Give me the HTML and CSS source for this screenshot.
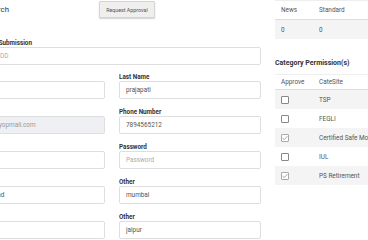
FILE: index.html
```html
<!DOCTYPE html>
<html>
<head>
<meta charset="utf-8">
<link rel="stylesheet" href="styles.css">
</head>
<body>
<div class="page">
  <div class="form">
    <div class="toolbar">
      <span class="title">Search</span>
      <button class="btn">Request Approval</button>
    </div>
    <div class="field wide">
      <label>Date of Last Submission</label>
      <input class="input" placeholder="YYYY-MM-DD">
    </div>
    <div class="grid">
      <div class="field"><label>First Name</label><input class="input"></div>
      <div class="field"><label>Last Name</label><input class="input" value="prajapati"></div>
      <div class="field"><label>Email</label><input class="input" disabled value="testing1@yopmail.com"></div>
      <div class="field"><label>Phone Number</label><input class="input" value="7894565212"></div>
      <div class="field"><label>Confirm</label><input class="input"></div>
      <div class="field"><label>Password</label><input class="input" placeholder="Password"></div>
      <div class="field"><label>City</label><input class="input" value="Ahmedabad"></div>
      <div class="field"><label>Other</label><input class="input" value="mumbai"></div>
      <div class="field"><label>Zip</label><input class="input"></div>
      <div class="field"><label>Other</label><input class="input" value="jaipur"></div>
    </div>
  </div>
  <div class="side">
    <table class="tbl top">
      <thead><tr><th class="c1">News</th><th>Standard</th></tr></thead>
      <tbody><tr class="odd"><td class="c1">0</td><td>0</td></tr></tbody>
    </table>
    <h3 class="heading">Category Permission(s)</h3>
    <table class="tbl cat">
      <thead><tr><th class="c1">Approve</th><th>CateSite</th></tr></thead>
      <tbody>
        <tr class="odd"><td class="c1"><span class="cb"></span></td><td>TSP</td></tr>
        <tr><td class="c1"><span class="cb"></span></td><td>FEGLI</td></tr>
        <tr class="odd"><td class="c1"><span class="cb on"><svg viewBox="0 0 8 8" width="8" height="8"><path d="M1.6 4.1 L3.2 5.6 L6.4 2.2" fill="none" stroke="#999" stroke-width="0.9"/></svg></span></td><td>Certified Safe Money</td></tr>
        <tr><td class="c1"><span class="cb"></span></td><td>IUL</td></tr>
        <tr class="odd"><td class="c1"><span class="cb on"><svg viewBox="0 0 8 8" width="8" height="8"><path d="M1.6 4.1 L3.2 5.6 L6.4 2.2" fill="none" stroke="#999" stroke-width="0.9"/></svg></span></td><td>PS Retirement</td></tr>
      </tbody>
    </table>
  </div>
</div>
</body>
</html>
```

FILE: styles.css
```css
html, body {
  margin: 0;
  padding: 0;
}
body {
  width: 368px;
  height: 240px;
  overflow: hidden;
  background: #fff;
  font-family: Roboto, "Liberation Sans", sans-serif;
  font-size: 6.4px;
  color: #333;
}
.page {
  display: flex;
  gap: 14px;
  margin-left: -37px;
  width: 520px;
  align-items: flex-start;
}
.form {
  width: 298px;
  flex: none;
}
.toolbar {
  display: flex;
  align-items: flex-start;
  height: 19px;
}
.title {
  width: 46px;
  text-align: right;
  font-size: 7.8px;
  line-height: 19px;
  color: #333;
}
.btn {
  margin: 1px 0 0 90px;
  width: 56px;
  height: 17px;
  padding: 0;
  font-family: Roboto, "Liberation Sans", sans-serif;
  font-size: 5.3px;
  color: #555;
  background: #efefef;
  border: 1px solid #d4d4d4;
  border-radius: 1px;
  box-shadow: 0 1px 1.5px rgba(0,0,0,0.18);
}
.field {
  display: flex;
  flex-direction: column;
}
.field label {
  font-weight: 700;
  font-size: 6.3px;
  line-height: 8px;
  color: #333;
}
.field.wide {
  margin-top: 20px;
  margin-bottom: 8px;
}
.input {
  box-sizing: border-box;
  height: 18px;
  width: 100%;
  margin: 0;
  padding: 0 6px;
  border: 1px solid #dedede;
  border-radius: 2px;
  font-family: Roboto, "Liberation Sans", sans-serif;
  font-size: 6.4px;
  color: #555;
  background: #fff;
  outline: none;
}
.input::placeholder {
  color: #aaa;
}
.input:disabled {
  background: #eef0f3;
  color: #999;
}
.grid {
  display: grid;
  grid-template-columns: 142px 142px;
  column-gap: 14px;
  row-gap: 9px;
}
.side {
  width: 200px;
  flex: none;
}
.tbl {
  width: 100%;
  border-collapse: collapse;
  font-size: 6.4px;
  color: #555;
}
.tbl th, .tbl td {
  text-align: left;
  font-weight: 400;
  padding: 0 6px;
  height: 19px;
}
.tbl th {
  border-bottom: 1px solid #ddd;
  height: 18px;
}
.tbl .c1 {
  width: 26px;
}
.tbl thead tr {
  border-top: 1px solid #eee;
}
.tbl tr.odd td {
  background: #f4f4f4;
}
.tbl.cat td {
  height: 19px;
}
.tbl.cat th {
  height: 14px;
}
.heading {
  margin: 20px 0 0 0;
  height: 15px;
  font-size: 7px;
  font-weight: 700;
  color: #333;
  line-height: 8px;
}
.cb {
  display: block;
  box-sizing: border-box;
  width: 8px;
  height: 8px;
  border: 1px solid #888;
  border-radius: 1px;
  background: #fff;
  position: relative;
}
.cb svg {
  position: absolute;
  left: -1px;
  top: -1px;
}
.cb.on {
  border-color: #aaa;
}
```
